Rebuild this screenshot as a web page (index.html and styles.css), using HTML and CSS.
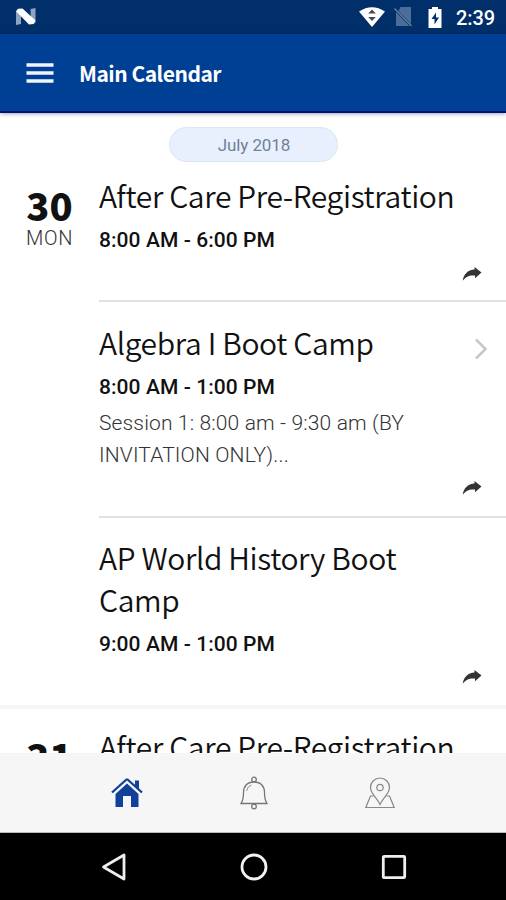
FILE: index.html
```html
<!DOCTYPE html>
<html lang="en">
<head>
<meta charset="utf-8">
<title>Main Calendar</title>
<link rel="stylesheet" href="styles.css">
</head>
<body>
<svg class="defs" width="0" height="0">
  <symbol id="share" viewBox="0 0 20 14"><path d="M12.500 0 19.500 5.500 13 11.200V8.500C7.500 8 4 9.300 .7 13.800 1.500 7.500 5.800 2.800 12.500 2.500Z" fill="#333"/></symbol>
</svg>
<div class="phone">
  <header class="status">
    <svg class="nougat" width="22" height="18" viewBox="0 0 22 18"><path d="M1 3.500 6 1V16L1 17ZM15.500 1 20.500 0V15L16 16Z" fill="#8fa3c0"/><path d="M1 3.200 3 .8 7.500 .5 20.500 12.500 18.500 16 14 16.500Z" fill="#fff"/></svg>
    <svg class="wifi" width="26" height="20" viewBox="0 0 26 20"><path d="M0 4.500Q13-4 26 4.500L13 20Z" fill="#fff"/><path d="m13 2.500 3.800 4H9.200ZM13 14l3.800-4H9.200Z" fill="#444b55"/></svg>
    <svg class="sim" width="18" height="20" viewBox="0 0 18 20"><path d="M6.500 0H17V17L4.500 4ZM2 5 15.500 19H2Z" fill="#4b6e98"/><path d="m.5 1.500 17 17.500" stroke="#6483a9" stroke-width="1.300"/></svg>
    <svg class="battery" width="14" height="21" viewBox="0 0 14 21"><path d="M4 0h6v2h3.500v19H.5V2H4Z" fill="#fff"/><path d="M8 5.500 3.500 12h3v5.500L11 10.500H8Z" fill="#002f69"/></svg>
    <span class="clock">2:39</span>
  </header>
  <div class="appbar">
    <svg width="28" height="20" viewBox="0 0 28 20"><path d="M.5 2h27M.5 10h27M.5 18h27" stroke="#f1f3ff" stroke-width="3.300"/></svg>
    <h1>Main Calendar</h1>
  </div>
  <main class="list">
    <div class="month">July 2018</div>
    <section class="day">
      <div class="date"><b>30</b><span>MON</span></div>
      <div class="events">
        <article class="event">
          <h2>After Care Pre-Registration</h2>
          <p class="time">8:00 AM - 6:00 PM</p>
          <svg class="share"><use href="#share"/></svg>
        </article>
        <article class="event detailed">
          <h2>Algebra I Boot Camp</h2>
          <p class="time">8:00 AM - 1:00 PM</p>
          <p class="desc">Session 1: 8:00 am - 9:30 am (BY<br>INVITATION ONLY)...</p>
          <svg class="share"><use href="#share"/></svg>
          <svg class="more" viewBox="0 0 14 22"><path d="m2 1.500 9.500 9.500L2 20.500" fill="none" stroke="#c7c7c7" stroke-width="2.500"/></svg>
        </article>
        <article class="event long">
          <h2>AP World History Boot<br>Camp</h2>
          <p class="time">9:00 AM - 1:00 PM</p>
          <svg class="share"><use href="#share"/></svg>
        </article>
      </div>
    </section>
    <section class="day">
      <div class="date"><b>31</b></div>
      <div class="events">
        <article class="event"><h2>After Care Pre-Registration</h2></article>
      </div>
    </section>
  </main>
  <nav class="tabs">
    <svg width="32" height="30" viewBox="0 0 32 30"><path d="M16 1 1 14.500M16 1l15 13.500" fill="none" stroke="#10409a" stroke-width="2.300"/><path d="M24 2.500h4V11l-4-3.600Z" fill="#10409a"/><path d="M16 5.500 27.500 16v13H20V18h-8v11H4.500V16Z" fill="#10409a"/></svg>
    <svg width="28" height="34" viewBox="0 0 28 34"><g fill="none" stroke="#777" stroke-width="1.300"><circle cx="14" cy="3.500" r="2.300"/><path d="M14 6C7 6 3.500 10.500 3.500 16.500 3.500 22 3 24.500 1 27.500H27C25 24.500 24.500 22 24.500 16.500 24.500 10.500 21 6 14 6Z"/><circle cx="14" cy="30.500" r="2.300"/><path d="M6.500 15q1-5 5-6" stroke-width=".8"/></g></svg>
    <svg width="30" height="32" viewBox="0 0 30 32"><g fill="none" stroke="#888" stroke-width="1.200"><path d="M15 27.500C12 21 5.500 16.500 5.500 10.500a9.500 9.500 0 0 1 19 0C24.500 16.500 18 21 15 27.500Z"/><circle cx="15" cy="10.500" r="3.200"/><path d="M8.500 19H5.500L.8 30.500H29.200L24.500 19H21.500"/></g></svg>
  </nav>
  <footer class="android">
    <svg width="26" height="30" viewBox="0 0 26 30"><path d="M2.500 15 23 3v24Z" fill="none" stroke="#eee" stroke-width="2.800" stroke-linejoin="round"/></svg>
    <svg width="30" height="30" viewBox="0 0 30 30"><circle cx="15" cy="15" r="12" fill="none" stroke="#f2f2f2" stroke-width="2.800"/></svg>
    <svg width="26" height="26" viewBox="0 0 26 26"><rect x="2.300" y="2.300" width="21.400" height="21.400" rx="1" fill="none" stroke="#eee" stroke-width="2.800"/></svg>
  </footer>
</div>
</body>
</html>
```
FILE: styles.css
```css
* { box-sizing: border-box; margin: 0; padding: 0; }
body { font-family: Roboto, "Liberation Sans", sans-serif; background: #fff; color: #111; }
svg { display: block; flex: none; }
.defs { position: absolute; }
.phone { width: 506px; height: 900px; display: flex; flex-direction: column; overflow: hidden; }
.status { height: 34px; flex: none; background: #002f69; display: flex; align-items: center; padding: 0 11px 0 15px; }
.wifi { margin-left: auto; }
.sim { margin-left: 9px; }
.battery { margin-left: 16px; }
.clock { width: 39px; margin-left: 14px; font-size: 20px; font-weight: 500; line-height: 34px; padding-top: 1px; color: #fff; white-space: nowrap; letter-spacing: -.1px; }
.appbar { height: 79px; flex: none; background: #004094; display: flex; align-items: center; gap: 25px; padding: 0 26px; border-bottom: 2px solid #000f80; box-shadow: 0 1px 4px rgba(0,0,0,.35); position: relative; }
h1, h2, .date b { font-family: "Noto Sans CJK SC", "Noto Sans", sans-serif; }
h1 { font-size: 21px; font-weight: 700; line-height: 30px; letter-spacing: -.5px; color: #fff; white-space: nowrap; }
.list { height: 640px; flex: none; overflow: hidden; padding-top: 14px; }
.month { width: 169px; height: 35px; margin: 0 auto; padding-left: 2px; border: 1px solid #dbe5f5; border-radius: 18px; background: #e8f0fd; color: #718096; font-size: 17px; line-height: 35px; text-align: center; letter-spacing: -.1px; }
.day { display: flex; }
.day + .day { border-top: 4px solid #f5f5f5; padding-top: 4px; }
.date { width: 99px; flex: none; display: flex; flex-direction: column; align-items: center; padding-top: 20px; }
.date b { font-size: 38px; font-weight: 900; line-height: 46px; }
.date span { font-size: 20px; font-weight: 300; line-height: 20px; letter-spacing: .7px; color: #333; }
.events { flex: 1; }
.event { position: relative; padding: 12px 24.500px 19px 0; }
.event + .event { border-top: 2px solid #e2e2e2; padding: 19px 24.500px 21px 0; }
.event.long { padding-top: 18px; }
h2 { font-size: 30px; font-weight: 350; line-height: 42px; letter-spacing: -.37px; font-variant-ligatures: common-ligatures; white-space: nowrap; }
.time { font-size: 21px; font-weight: 500; line-height: 30px; margin-top: 9px; letter-spacing: .07px; white-space: nowrap; }
.desc { font-size: 21px; font-weight: 300; line-height: 32px; margin-top: 5px; letter-spacing: .14px; color: #333; white-space: nowrap; }
.share { width: 20px; height: 14px; margin: 12px 0 0 auto; }
.detailed .share { margin-top: 10px; }
.long .share { margin-top: 11px; }
.more { position: absolute; width: 14px; height: 22px; right: 18px; top: 36px; }
.tabs { height: 80px; flex: none; background: #f6f6f6; border-bottom: 1px solid #bbb; display: flex; align-items: center; justify-content: center; gap: 97px; }
.android { height: 67px; flex: none; background: #000; display: flex; align-items: center; justify-content: center; gap: 112px; padding-left: 1px; }
```
